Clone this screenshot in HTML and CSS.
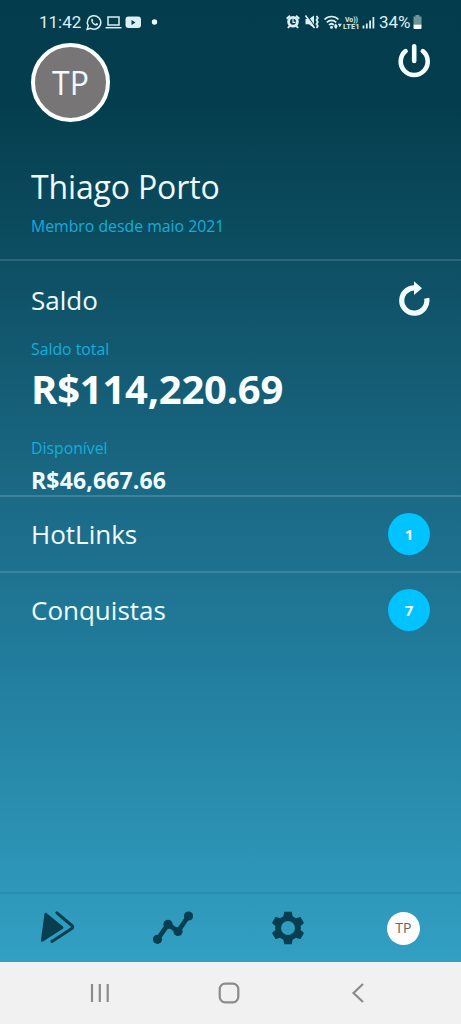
FILE: index.html
```html
<!DOCTYPE html>
<html lang="pt-BR">
<head>
<meta charset="utf-8">
<title>Perfil</title>
<link rel="stylesheet" href="styles.css">
</head>
<body>
<div class="app">
  <div class="statusbar">
    <span class="clock">11:42</span>
    <svg class="notifications" width="80" height="20" viewBox="0 0 80 20" fill="none" stroke="#dceff3" stroke-width="1.5">
      <path d="M2.2 17.3l1-3.6a6.7 6.7 0 1 1 2.6 2.6z"/>
      <path d="M6.3 7.2c.7-1 1.5-.3 1.9 1.3l-.6.9c.7 1.300 1.500 2 2.900 2.600l1-.9c1.600.6 2 .9 1.200 1.900-2.500 2-7.300-2.200-6.400-5.800z" fill="#dceff3" stroke="none"/>
      <rect x="23" y="5" width="11" height="8"/>
      <path d="M20.500 15.700h16"/>
      <rect x="40.500" y="4.500" width="15.500" height="11.500" rx="3" fill="#dceff3" stroke="none"/>
      <path d="M46.500 8v5l4-2.500z" fill="#033c4c" stroke="none"/>
      <circle cx="69.500" cy="10" r="2.700" fill="#eefcff" stroke="none"/>
    </svg>
    <svg class="signals" width="92" height="20" viewBox="0 0 92 20" fill="none" stroke="#dceff3" stroke-width="1.600">
      <circle cx="8" cy="9.800" r="4.400" stroke-width="2.800"/>
      <path d="M8 7v3.300h2.500" stroke-width="1.200"/>
      <path d="M1.700 6.800l3.300-3M14.300 6.800l-3.300-3M4.500 14l-1.500 2M11.500 14l1.500 2" stroke-width="2"/>
      <path d="M20.500 7h3.500l5-3.500v12.500l-5-3.800h-3.500z" fill="#dceff3" stroke="none"/>
      <path d="M22 3l8 12" stroke="#033c4c" stroke-width="1.200"/>
      <path d="M20.500 3.500l9 12.500"/>
      <path d="M31.500 4l1.300 2-1.300 2 1.300 2-1.300 2 1.300 2-1.300 2" stroke-width="1.800"/>
      <path d="M39.500 7.500c4-4 10-4 14 0M41.800 10.300c2.700-2.700 6.700-2.700 9.400 0M44 13c1.500-1.500 3.500-1.500 5 0" stroke-width="1.700"/>
      <circle cx="46.500" cy="15.300" r="1.500" fill="#dceff3" stroke="none"/>
      <path d="M49 14l1.800-2.500 1.800 2.500-1 2.500h-1.500zM52.800 11.800h4l-2 3.400z" fill="#dceff3" stroke="none"/>
      <text x="60" y="9.500" class="volte" textLength="13" lengthAdjust="spacingAndGlyphs">Vo))</text>
      <text x="58" y="16.800" class="volte" textLength="16.500" lengthAdjust="spacingAndGlyphs">LTE1</text>
      <path d="M78.500 13.500v3M81.800 11.500v5M85.100 8.500v8M88.400 5v11.500" stroke-width="1.800"/>
    </svg>
    <span class="percent">34%</span>
    <svg class="battery" width="9" height="15" viewBox="0 0 9 15">
      <path d="M2.500 0h4v1.500H8.500V9.500H.5v-8h2z" fill="#6f929b"/>
      <path d="M.5 9.500h8V13q0 1-1 1h-6q-1 0-1-1z" fill="#f3ffff"/>
    </svg>
  </div>

  <div class="profile">
    <div class="avatar-row">
      <div class="avatar">TP</div>
      <svg class="power" width="34" height="36" viewBox="0 0 34 36" fill="none" stroke="#f4feff" stroke-width="4.600" stroke-linecap="round">
        <path d="M17.200 3.300v14.700M8.600 8.100a13.500 13.500 0 1 0 17.200 0"/>
      </svg>
    </div>
    <div class="name">Thiago Porto</div>
    <div class="since">Membro desde maio 2021</div>
  </div>

  <div class="balance">
    <div class="balance-head">
      <div class="title">Saldo</div>
      <svg class="refresh" width="32" height="38" viewBox="0 0 32 38">
        <path d="M17.500 8A12.600 12.600 0 1 0 28.700 18.200" fill="none" stroke="#f0fcff" stroke-width="5.200"/>
        <path d="M16 1.200l8 7-8 6.800z" fill="#f0fcff"/>
      </svg>
    </div>
    <div class="label total-label">Saldo total</div>
    <div class="total">R$114,220.69</div>
    <div class="label available-label">Disponível</div>
    <div class="available">R$46,667.66</div>
  </div>

  <div class="row"><div class="title">HotLinks</div><div class="badge">1</div></div>
  <div class="row last"><div class="title">Conquistas</div><div class="badge">7</div></div>

  <div class="tabs">
    <div class="tab">
      <svg width="36" height="34" viewBox="0.800 0 36 34">
        <path d="M7.500 2.200l16 13c1 .9 1 1.800 0 2.600L4.200 30.300c-1.500 1-2.600.2-2.400-1.400L5.200 3.200c.2-1.400 1.200-1.900 2.300-1z" fill="#083f50"/>
        <path d="M17.700 1.800l14.900 12.700c1.200 1 1.200 2.100 0 3.100L12.700 30.500" fill="none" stroke="#083f50" stroke-width="3" stroke-linecap="round"/>
      </svg>
    </div>
    <div class="tab">
      <svg width="40" height="34" viewBox="0 0 40 34" fill="#083f50">
        <path d="M4.500 28.300L15 13.300l10 7.200L35.500 5" fill="none" stroke="#083f50" stroke-width="4.700"/>
        <circle cx="4.500" cy="28.300" r="4.600"/><circle cx="15" cy="13.300" r="4.600"/>
        <circle cx="25" cy="20.500" r="4.600"/><circle cx="35.500" cy="5" r="4.600"/>
      </svg>
    </div>
    <div class="tab">
      <svg width="34" height="34" viewBox="-17 -17 34 34" fill="#083f50">
        <path fill-rule="evenodd" d="M-3.700-16.200h7.400l1 4.600a12 12 0 0 1 3.300 1.900l4.400-1.500 3.600 6.300-3.300 3a12 12 0 0 1 0 3.800l3.300 3-3.600 6.300-4.400-1.500a12 12 0 0 1-3.300 1.900l-1 4.600h-7.400l-1-4.600a12 12 0 0 1-3.300-1.900l-4.400 1.500-3.600-6.300 3.300-3a12 12 0 0 1 0-3.800l-3.300-3 3.600-6.300 4.400 1.500a12 12 0 0 1 3.300-1.900zM7 0A7 7 0 1 0-7 0 7 7 0 1 0 7 0z"/>
      </svg>
    </div>
    <div class="tab"><div class="mini-avatar">TP</div></div>
  </div>
</div>

<div class="sysnav">
  <svg width="20" height="20" viewBox="0 0 20 20"><path d="M2 1v18M9.800 1v18M17.700 1v18"/></svg>
  <svg class="home" width="22" height="22" viewBox="0 0 22 22"><rect x="1.700" y="1.700" width="18.600" height="18.600" rx="5.500"/></svg>
  <svg width="14" height="20" viewBox="0 0 14 20"><path d="M12 1L2.500 10l9.500 9"/></svg>
</div>
</body>
</html>
```

FILE: styles.css
```css
* { box-sizing: border-box; }

body {
  margin: 0;
  width: 461px;
  height: 1024px;
  overflow: hidden;
  font-family: "Open Sans", "Noto Sans", sans-serif;
  color: #eefbff;
}

.app {
  display: flex;
  flex-direction: column;
  height: 962px;
  background: linear-gradient(#033c4c 0, #043e4e 105px, #0d4e62 255px, #1b6a86 500px, #217b9b 650px, #32a0c3 962px);
}

.statusbar {
  display: flex;
  align-items: center;
  height: 42px;
  padding: 2px 38px 0 39px;
  font-family: Roboto, sans-serif;
  font-size: 17px;
  line-height: 20px;
  color: #dceff3;
}

.clock { width: 46px; }
.signals { margin-left: auto; }
.percent { width: 35px; margin-left: 2px; white-space: nowrap; }
.battery { margin: 0 1px 0 -1px; }
.volte { font: bold 8px Roboto, sans-serif; fill: #dceff3; stroke: none; }

.profile {
  height: 219px;
  padding: 1px 30px 0 31px;
  border-bottom: 2px solid #2b667a;
}

.avatar-row {
  display: flex;
  justify-content: space-between;
  height: 79px;
}

.avatar {
  display: flex;
  align-items: center;
  justify-content: center;
  width: 79px;
  height: 79px;
  border: 4px solid #fcffff;
  border-radius: 50%;
  background: #777576;
  font-size: 32px;
  line-height: 40px;
}

.name {
  margin-top: 45px;
  font-size: 32px;
  letter-spacing: -0.150px;
  line-height: 40px;
  white-space: nowrap;
}

.since, .label {
  font-size: 15.800px;
  line-height: 20px;
  color: #12aedd;
}

.since { margin-top: 9px; }

.balance {
  height: 236px;
  padding: 19px 31px 0 31px;
  border-bottom: 2px solid #3b829a;
}

.balance-head {
  display: flex;
  justify-content: space-between;
  height: 59px;
}

.title {
  font-size: 26px;
  line-height: 40px;
}

.total {
  margin-top: 5px;
  font-size: 40px;
  font-weight: 700;
  letter-spacing: -0.250px;
  line-height: 50px;
  color: #fafeff;
}

.available-label { margin-top: 24px; }

.available {
  margin-top: 7px;
  font-size: 23px;
  font-weight: 700;
  letter-spacing: 0.150px;
  line-height: 30px;
}

.row {
  display: flex;
  align-items: center;
  justify-content: space-between;
  height: 76px;
  padding: 0 31px;
  border-bottom: 2px solid #3a869f;
}

.last {
  height: 73px;
  border-bottom: none;
}

.badge {
  display: flex;
  align-items: center;
  justify-content: center;
  width: 42px;
  height: 42px;
  border-radius: 50%;
  background: #00c3ff;
  font-size: 15px;
  font-weight: 700;
}

.tabs {
  display: grid;
  grid-template-columns: repeat(4, 1fr);
  height: 70px;
  margin-top: auto;
  border-top: 2px solid #2a8eb0;
}

.tab {
  display: flex;
  align-items: center;
  justify-content: center;
}

.mini-avatar {
  width: 33px;
  height: 33px;
  border-radius: 50%;
  background: #fdfdfd;
  color: #656565;
  font-size: 14px;
  line-height: 32px;
  text-align: center;
}

.sysnav {
  display: flex;
  align-items: center;
  justify-content: space-between;
  height: 62px;
  padding: 0 96px 0 90px;
  background: #f1f1f1;
}

.sysnav svg {
  fill: none;
  stroke: #8b8b8b;
  stroke-width: 2.200;
}

.sysnav .home { margin-right: 4px; }
```
